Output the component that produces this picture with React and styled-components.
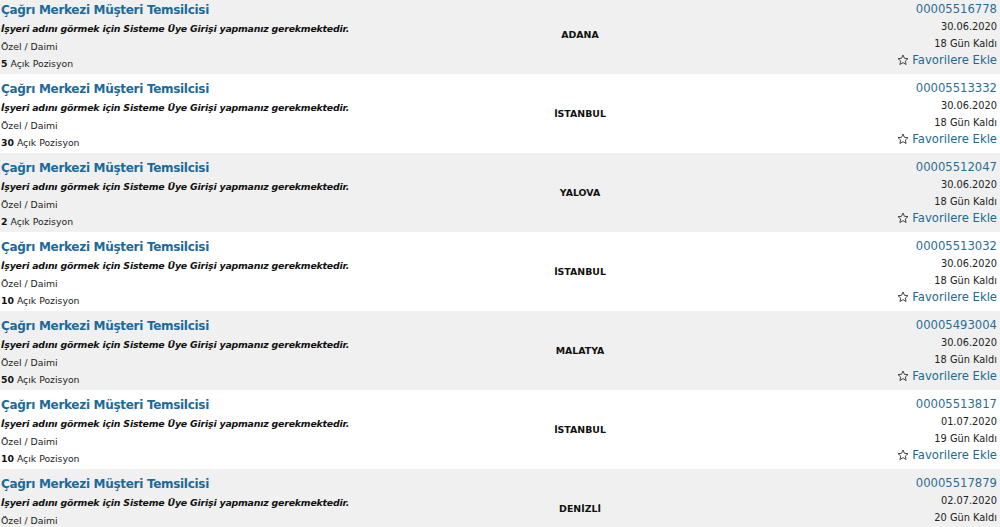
import styled, { createGlobalStyle } from "styled-components";

const GlobalStyle = createGlobalStyle`
  html, body {
    margin: 0;
    padding: 0;
    background: #ffffff;
    font-family: "DejaVu Sans", Verdana, sans-serif;
    color: #111;
    overflow: hidden;
  }
`;

const jobs = [
  { no: "00005516778", city: "ADANA", date: "30.06.2020", left: 18, open: 5 },
  { no: "00005513332", city: "İSTANBUL", date: "30.06.2020", left: 18, open: 30 },
  { no: "00005512047", city: "YALOVA", date: "30.06.2020", left: 18, open: 2 },
  { no: "00005513032", city: "İSTANBUL", date: "30.06.2020", left: 18, open: 10 },
  { no: "00005493004", city: "MALATYA", date: "30.06.2020", left: 18, open: 50 },
  { no: "00005513817", city: "İSTANBUL", date: "01.07.2020", left: 19, open: 10 },
  { no: "00005517879", city: "DENİZLİ", date: "02.07.2020", left: 20, open: 1 },
];

// list is scrolled a few pixels, so the first row is cut at the top
const List = styled.div`
  margin-top: -5px;
`;

const Row = styled.div`
  display: grid;
  grid-template-columns: 500px 158px 1fr;
  align-items: stretch;
  height: 79px;
  box-sizing: border-box;
  padding: 5px 3px 0 1px;
  background: ${(p) => (p.shaded ? "#f0f0f0" : "#ffffff")};
`;

const Info = styled.div`
  display: flex;
  flex-direction: column;
`;

const Title = styled.a`
  font-size: 12px;
  font-weight: bold;
  line-height: 20px;
  color: #1c6a9b;
  text-decoration: none;
  letter-spacing: -0.3px;
`;

const Notice = styled.div`
  font-size: 9.4px;
  font-weight: bold;
  font-style: italic;
  line-height: 18px;
  letter-spacing: -0.2px;
  color: #111;
`;

const Meta = styled.div`
  font-size: 9.3px;
  line-height: ${(p) => p.lh || 18}px;
  color: #222;

  b {
    font-weight: bold;
    color: #111;
  }
`;

const City = styled.div`
  display: flex;
  align-items: center;
  justify-content: center;
  font-size: 9.4px;
  font-weight: bold;
  color: #111;
  margin-top: -5px;
`;

const Side = styled.div`
  display: flex;
  flex-direction: column;
  align-items: flex-end;
  text-align: right;
`;

const Number = styled.a`
  font-size: 11.6px;
  line-height: 18px;
  color: #2a6d94;
  text-decoration: none;
`;

const Small = styled.div`
  font-size: 9.8px;
  line-height: 17px;
  color: #222;
`;

const Fav = styled.a`
  display: flex;
  align-items: center;
  gap: 3px;
  font-size: 11.6px;
  line-height: 16px;
  color: #22698f;
  text-decoration: none;

  svg {
    width: 12px;
    height: 12px;
  }
`;

const StarIcon = () => (
  <svg viewBox="0 0 24 24" fill="none" stroke="#333" strokeWidth="1.8" strokeLinejoin="miter">
    <polygon points="12,2 14.9,8.6 22,9.3 16.6,14 18.2,21 12,17.3 5.8,21 7.4,14 2,9.3 9.1,8.6" />
  </svg>
);

const JobRow = ({ job, shaded }) => (
  <Row shaded={shaded}>
    <Info>
      <Title href="#">Çağrı Merkezi Müşteri Temsilcisi</Title>
      <Notice>İşyeri adını görmek için Sisteme Üye Girişi yapmanız gerekmektedir.</Notice>
      <Meta>Özel / Daimi</Meta>
      <Meta lh={16}>
        <b>{job.open}</b> Açık Pozisyon
      </Meta>
    </Info>
    <City>{job.city}</City>
    <Side>
      <Number href="#">{job.no}</Number>
      <Small>{job.date}</Small>
      <Small>{job.left} Gün Kaldı</Small>
      <Fav href="#">
        <StarIcon />
        Favorilere Ekle
      </Fav>
    </Side>
  </Row>
);

export default function App() {
  return (
    <>
      <GlobalStyle />
      <List>
        {jobs.map((job, i) => (
          <JobRow key={job.no} job={job} shaded={i % 2 === 0} />
        ))}
      </List>
    </>
  );
}
